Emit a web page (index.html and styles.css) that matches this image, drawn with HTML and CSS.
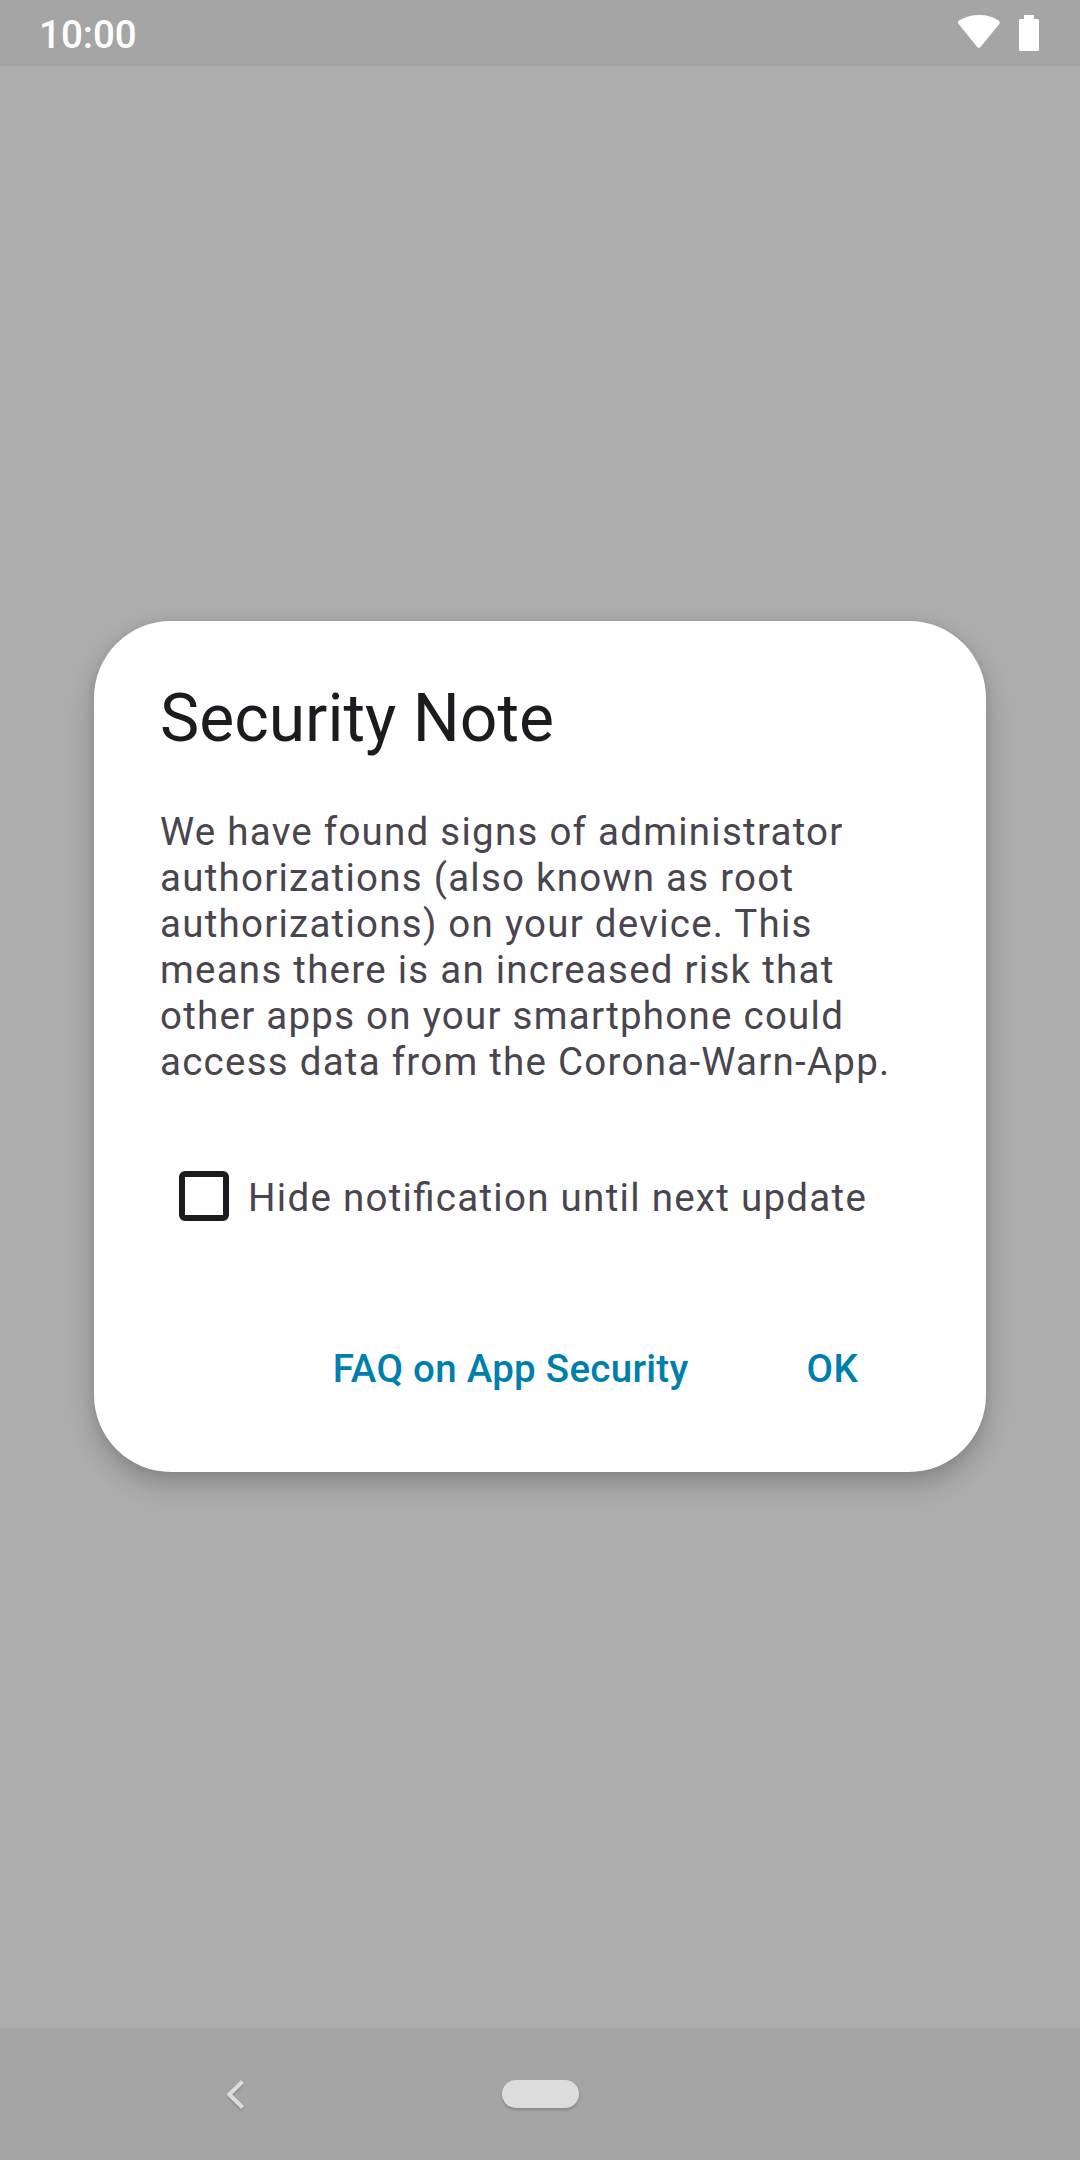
FILE: index.html
```html
<!DOCTYPE html>
<html lang="en">
<head>
<meta charset="utf-8">
<title>Security Note</title>
<link rel="stylesheet" href="styles.css">
</head>
<body>
<div class="screen">
  <header class="status-bar">
    <span class="clock">10:00</span>
    <div class="status-icons">
      <svg class="wifi" viewBox="0.300 0 43 36" preserveAspectRatio="none" aria-label="Wi-Fi"><path d="M1.200 9.200C-.1 8.200-.1 6.600 1.200 5.700C7.200 1.900 14 0 22 0S36.800 1.900 42.200 5.700C43.300 6.600 43.300 8.200 42.200 9.400L23.100 32.300C22.300 33.300 21 33.300 20.200 32.300Z"/></svg>
      <svg class="battery" viewBox="0 0 20 36" aria-label="Battery"><path d="M5 0H15V4H18.500Q20 4 20 5.500V34.500Q20 36 18.500 36H1.500Q0 36 0 34.500V5.500Q0 4 1.500 4H5Z"/></svg>
    </div>
  </header>
  <main class="backdrop">
    <section class="dialog" role="dialog" aria-labelledby="title">
      <h1 class="title" id="title">Security Note</h1>
      <p class="message">We have found signs of administrator<br>authorizations (also known as root<br>authorizations) on your device. This<br>means there is an increased risk that<br>other apps on your smartphone could<br>access data from the Corona-Warn-App.</p>
      <label class="option"><span class="checkbox"></span><span class="option-text">Hide notification until next update</span></label>
      <div class="actions">
        <a class="action">FAQ on App Security</a>
        <a class="action">OK</a>
      </div>
    </section>
  </main>
  <footer class="nav-bar">
    <svg class="back" viewBox="0 0 20 32" aria-label="Back"><path d="M17.500 3.500L4.300 16.500L17.500 29.500"/></svg>
    <div class="home"></div>
  </footer>
</div>
</body>
</html>
```
FILE: styles.css
```css
* { box-sizing: border-box; }
body { margin: 0; font-family: Roboto, sans-serif; }
.screen { width: 1080px; height: 2160px; display: flex; flex-direction: column; background: #adadad; }
.status-bar { height: 66px; padding: 0 41px 0 39px; display: flex; align-items: center; justify-content: space-between; background: #a5a5a5; }
.clock { font-size: 38.5px; font-weight: 500; color: #fff; line-height: 46px; padding-top: 3px; }
.status-icons { display: flex; gap: 19.5px; fill: #fff; }
.wifi { width: 42px; height: 36px; }
.battery { width: 20px; height: 36px; }
.backdrop { flex: 1; padding: 555px 94px 0; }
.dialog { height: 851px; padding: 59px 66px 0; border-radius: 77px; background: #fff; box-shadow: 0 12px 26px rgba(0,0,0,.22), 0 0 10px rgba(0,0,0,.07); }
.title { margin: 0; font-size: 66px; font-weight: 400; line-height: 78px; color: #1c1b1f; }
.message { margin: 51px 0 0; font-size: 38.5px; line-height: 46px; letter-spacing: 1.25px; color: #49454f; white-space: nowrap; }
.option { display: flex; align-items: center; height: 50px; margin-top: 86px; padding-left: 19px; gap: 19px; }
.checkbox { width: 50px; height: 50px; border: 6px solid #1c1b1f; border-radius: 6px; }
.option-text { padding-top: 4px; font-size: 38.5px; line-height: 46px; letter-spacing: 1.28px; font-feature-settings: "liga" 1; color: #49454f; }
.actions { display: flex; justify-content: flex-end; gap: 118px; margin-top: 125px; padding-right: 62px; }
.action { color: #007fad; font-size: 38.5px; font-weight: 500; line-height: 46px; letter-spacing: .275px; }
.nav-bar { height: 132px; display: flex; align-items: center; background: #a5a5a5; }
.back { width: 20px; height: 32px; margin-left: 225px; fill: none; stroke: #dcdcdc; stroke-width: 4; filter: drop-shadow(0 2px 1px rgba(0,0,0,.15)); }
.home { width: 77px; height: 28px; margin-left: 257px; border-radius: 14px; background: #dcdcdc; box-shadow: 0 2px 3px rgba(0,0,0,.18); }
```
